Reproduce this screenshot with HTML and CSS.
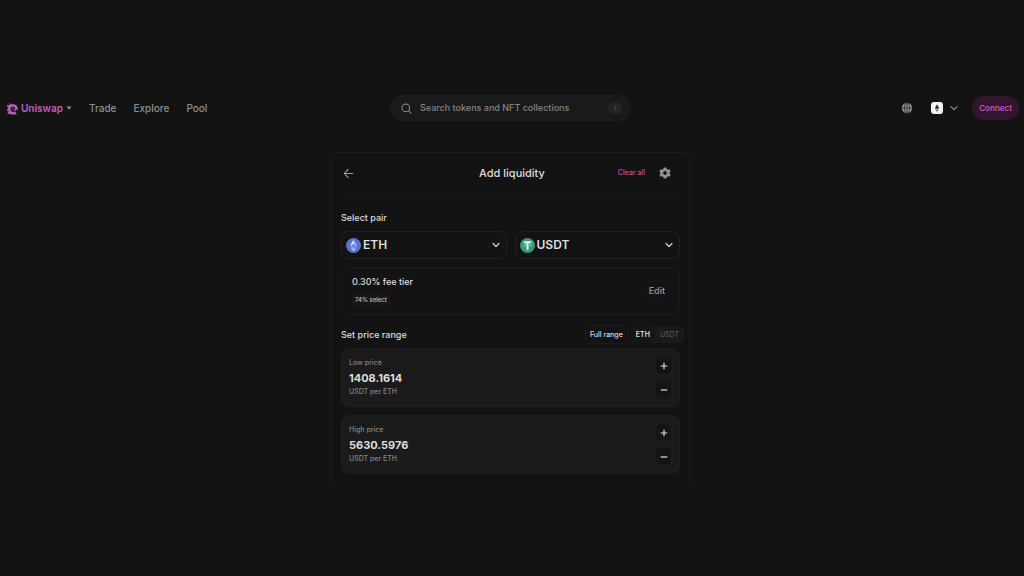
FILE: index.html
```html
<!DOCTYPE html>
<html lang="en">
<head>
<meta charset="utf-8">
<meta name="viewport" content="width=device-width, initial-scale=1">
<title>Add liquidity - Uniswap</title>
<link rel="stylesheet" href="styles.css">
</head>
<body>
<header class="topbar">
  <nav class="nav">
    <button class="brand" type="button" aria-haspopup="menu">
      <svg class="brand-mark" viewBox="0 0 26 26" aria-hidden="true"><path d="M1 5L7 7L7 2L12 5C19 3 25 9 24 17L21 14L20 19L17 16L18 11L13 9L9 12L9 17L13 20L18 19L22 25L11 25L2 23L6 19L1 17L5 12Z" fill="#b95bb9"/><path d="M10 12L15 10L17 14L15 18L11 17Z" fill="#4e204e"/><path d="M3 9L6 10L4 13Z" fill="#b95bb9"/></svg>
      <span>Uniswap</span>
      <svg class="brand-caret" viewBox="0 0 6 4" aria-hidden="true"><path d="M0.5 0.5H5.5L3 3.7Z" fill="currentColor"/></svg>
    </button>
    <a class="nav-link" href="#trade">Trade</a>
    <a class="nav-link" href="#explore">Explore</a>
    <a class="nav-link" href="#pool">Pool</a>
  </nav>
  <label class="search">
    <svg class="search-icon" viewBox="0 0 12 12" fill="none" stroke="currentColor" stroke-width="1.1" stroke-linecap="round" aria-hidden="true"><circle cx="5.2" cy="5.2" r="4.2"/><path d="M8.3 8.3L11 11"/></svg>
    <input class="search-input" type="search" aria-label="Search" placeholder="Search tokens and NFT collections">
    <kbd class="search-key">/</kbd>
  </label>
  <div class="actions">
    <button class="icon-button" type="button" aria-label="Language">
      <svg class="globe" viewBox="0 0 12 12" fill="none" aria-hidden="true"><circle cx="6" cy="6" r="5.2" fill="#8f8f8f"/><g stroke="#202020" stroke-width="0.7"><path d="M1 6H11M6 1V11"/><ellipse cx="6" cy="6" rx="2.5" ry="5.2"/></g></svg>
    </button>
    <button class="network" type="button" aria-label="Network: Ethereum">
      <svg class="network-logo" viewBox="0 0 12 12" aria-hidden="true"><rect width="12" height="12" rx="3" fill="#f2f2f2"/><path d="M6 2.3L8.2 6L6 7.3L3.8 6Z" fill="#333"/><path d="M3.9 6.7L6 8L8.1 6.7L6 9.8Z" fill="#555"/></svg>
      <svg class="chevron" viewBox="0 0 8 8" fill="none" stroke="#8f8f8f" stroke-width="1.2" stroke-linecap="round" stroke-linejoin="round" aria-hidden="true"><path d="M1 2.7L4 5.7L7 2.7"/></svg>
    </button>
    <button class="connect" type="button">Connect</button>
  </div>
</header>

<main class="card">
  <div class="card-head">
    <button class="back" type="button" aria-label="Back">
      <svg class="back-icon" viewBox="0 0 12 12" fill="none" stroke="currentColor" stroke-width="1.2" stroke-linecap="round" stroke-linejoin="round" aria-hidden="true"><path d="M10.6 6H1.4M5.6 1.4L1.4 6L5.6 10.6"/></svg>
    </button>
    <h1 class="title">Add liquidity</h1>
    <div class="head-tools">
      <button class="clear" type="button">Clear all</button>
      <button class="icon-button" type="button" aria-label="Settings">
        <svg class="gear" viewBox="0 0 24 24" aria-hidden="true"><path fill="#949494" fill-rule="evenodd" d="M9.4 1H14.6L15.3 4.2L17.6 5.5L20.7 4.5L23.3 9L20.9 11.2V12.8L23.3 15L20.7 19.5L17.6 18.5L15.3 19.8L14.6 23H9.4L8.7 19.8L6.4 18.5L3.3 19.5L0.7 15L3.1 12.8V11.2L0.7 9L3.3 4.5L6.4 5.5L8.7 4.2ZM12 8.2A3.8 3.8 0 1 0 12 15.8A3.8 3.8 0 1 0 12 8.2Z"/></svg>
      </button>
    </div>
  </div>

  <div class="card-body">
    <h2 class="label">Select pair</h2>
    <div class="pair">
      <button class="token" type="button" aria-haspopup="dialog">
        <svg class="token-logo" viewBox="0 0 30 30" aria-hidden="true"><circle cx="15" cy="15" r="15" fill="#5c73c9"/><path d="M15 4L22 15.5L15 19.5L8 15.5Z" fill="#b9c8fa"/><path d="M15 4V19.5L8 15.5Z" fill="#dce4ff"/><path d="M15 11.5L22 15.5L15 19.5L8 15.5Z" fill="#7389dc"/><path d="M8.5 18L15 22L21.5 18L15 26.5Z" fill="#c8d4fc"/></svg>
        <span class="token-name">ETH</span>
        <svg class="chevron" viewBox="0 0 8 8" fill="none" stroke="#d0d0d0" stroke-width="1.2" stroke-linecap="round" stroke-linejoin="round" aria-hidden="true"><path d="M1 2.5L4 5.5L7 2.5"/></svg>
      </button>
      <button class="token" type="button" aria-haspopup="dialog">
        <svg class="token-logo" viewBox="0 0 30 30" aria-hidden="true"><circle cx="15" cy="15" r="15" fill="#319a78"/><path d="M7.5 6.5H22.5V10.5H17V24H13V10.5H7.5Z" fill="#e4f4ee"/><ellipse cx="15" cy="14.5" rx="9" ry="2.2" fill="none" stroke="#b4dece" stroke-width="1"/></svg>
        <span class="token-name">USDT</span>
        <svg class="chevron" viewBox="0 0 8 8" fill="none" stroke="#d0d0d0" stroke-width="1.2" stroke-linecap="round" stroke-linejoin="round" aria-hidden="true"><path d="M1 2.5L4 5.5L7 2.5"/></svg>
      </button>
    </div>

    <section class="fee">
      <div>
        <p class="fee-name">0.30% fee tier</p>
        <span class="fee-badge">74% select</span>
      </div>
      <button class="edit" type="button">Edit</button>
    </section>

    <div class="range-head">
      <h2 class="label">Set price range</h2>
      <button class="full-range" type="button">Full range</button>
      <div class="toggle" role="group" aria-label="Price currency">
        <button class="toggle-item is-active" type="button" aria-pressed="true">ETH</button>
        <button class="toggle-item" type="button" aria-pressed="false">USDT</button>
      </div>
    </div>

    <div class="prices">
      <section class="price">
        <div class="price-main">
          <label class="price-label" for="low">Low price</label>
          <input class="price-input" id="low" type="text" inputmode="decimal" value="1408.1614">
          <span class="price-unit">USDT per ETH</span>
        </div>
        <div class="steps">
          <button class="step" type="button" aria-label="Increase low price"><svg class="step-icon" viewBox="0 0 8 8" stroke="currentColor" stroke-width="1.2" aria-hidden="true"><path d="M0.7 4H7.3M4 0.7V7.3"/></svg></button>
          <button class="step" type="button" aria-label="Decrease low price"><svg class="step-icon" viewBox="0 0 8 8" stroke="currentColor" stroke-width="1.2" aria-hidden="true"><path d="M0.7 4H7.3"/></svg></button>
        </div>
      </section>
      <section class="price">
        <div class="price-main">
          <label class="price-label" for="high">High price</label>
          <input class="price-input" id="high" type="text" inputmode="decimal" value="5630.5976">
          <span class="price-unit">USDT per ETH</span>
        </div>
        <div class="steps">
          <button class="step" type="button" aria-label="Increase high price"><svg class="step-icon" viewBox="0 0 8 8" stroke="currentColor" stroke-width="1.2" aria-hidden="true"><path d="M0.7 4H7.3M4 0.7V7.3"/></svg></button>
          <button class="step" type="button" aria-label="Decrease high price"><svg class="step-icon" viewBox="0 0 8 8" stroke="currentColor" stroke-width="1.2" aria-hidden="true"><path d="M0.7 4H7.3"/></svg></button>
        </div>
      </section>
    </div>
  </div>
</main>
</body>
</html>
```
FILE: styles.css
```css
* {
  box-sizing: border-box;
}

body {
  margin: 0;
  padding: 95px 5px 0 2px;
  background: #131313;
  color: #dedede;
  font-family: Inter, "Liberation Sans", sans-serif;
  font-size: 10px;
  font-weight: 500;
  line-height: 12px;
}

h1, h2, p {
  margin: 0;
  font-weight: 500;
}

button, input {
  margin: 0;
  padding: 0;
  border: 0;
  background: none;
  color: inherit;
  font: inherit;
}

svg {
  display: block;
  flex: none;
}

/* Top bar */
.topbar {
  display: grid;
  grid-template-columns: 1fr minmax(160px, 241px) 1fr;
  align-items: center;
}

.nav {
  display: flex;
  align-items: center;
  gap: 17px;
  padding-left: 4px;
}

.brand {
  display: flex;
  align-items: center;
  gap: 2px;
  color: #c05fc2;
  font-weight: 600;
}

.brand-mark {
  width: 13px;
  height: 13px;
}

.brand-caret {
  width: 6px;
  height: 4px;
  margin-left: 1px;
  color: #8f8f8f;
}

.nav-link {
  color: #8f8f8f;
  text-decoration: none;
}

.search {
  display: flex;
  align-items: center;
  gap: 8px;
  height: 26px;
  padding: 0 8px 0 10px;
  border: 1px solid #202020;
  border-radius: 13px;
  background: #1a1a1a;
  color: #929292;
}

.search-icon {
  width: 11px;
  height: 11px;
}

.search-input {
  flex: 1;
  min-width: 0;
  outline: 0;
  font-size: 9px;
}

.search-input::placeholder {
  color: #858585;
  opacity: 1;
}

.search-key {
  width: 14px;
  border-radius: 5px;
  background: #242424;
  color: #5c5c5c;
  font-family: inherit;
  font-size: 7px;
  text-align: center;
}

.actions {
  display: flex;
  align-items: center;
  justify-content: flex-end;
}

.globe {
  width: 12px;
  height: 12px;
}

.network {
  display: flex;
  align-items: center;
  gap: 7px;
  margin: 0 14px 0 18px;
}

.network-logo {
  width: 12px;
  height: 12px;
}

.chevron {
  width: 8px;
  height: 8px;
}

.connect {
  height: 24px;
  padding: 0 7px;
  border-radius: 12px;
  background: #34152f;
  color: #b75cb5;
  font-size: 8px;
  font-weight: 600;
}

/* Card */
.card {
  max-width: 359px;
  margin: 31px auto 0;
  border: 1px solid #1e1e1e;
  border-bottom: 0;
  border-radius: 8px 8px 0 0;
}

.card-head {
  display: grid;
  grid-template-columns: 1fr auto 1fr;
  align-items: center;
  margin: 0 9px;
  padding: 13px 9px 18px 2px;
  border-bottom: 1px solid #191919;
}

.back-icon {
  width: 11px;
  height: 11px;
  color: #a0a0a0;
}

.title {
  padding-left: 10px;
  font-size: 11px;
  line-height: 14px;
}

.head-tools {
  display: flex;
  align-items: center;
  justify-content: flex-end;
  gap: 14px;
}

.clear {
  color: #b351b6;
  font-size: 7px;
}

.gear {
  width: 12px;
  height: 12px;
}

.card-body {
  padding: 13px 9px 10px;
}

.label {
  font-size: 9px;
}

.pair {
  display: grid;
  grid-template-columns: 1fr 1fr;
  gap: 8px;
  margin-top: 7px;
}

.token {
  display: flex;
  align-items: center;
  gap: 2px;
  height: 28px;
  padding: 0 6px 0 4px;
  border: 1px solid #222;
  border-radius: 8px;
}

.token-logo {
  width: 15px;
  height: 15px;
}

.token-name {
  flex: 1;
  font-size: 12px;
  font-weight: 600;
  text-align: left;
}

.fee {
  display: flex;
  align-items: center;
  justify-content: space-between;
  margin-top: 8px;
  padding: 8px 10px;
  border: 1px solid #1b1b1b;
  border-radius: 8px;
}

.fee-name {
  font-size: 9px;
}

.fee-badge {
  display: block;
  width: fit-content;
  margin-top: 6px;
  padding: 0 3px;
  border-radius: 3px;
  background: #181818;
  color: #c4c4c4;
  font-size: 6px;
}

.edit {
  height: 20px;
  padding: 0 3px;
  border: 1px solid #191919;
  border-radius: 5px;
  color: #9b9b9b;
  font-size: 9px;
}

.range-head {
  display: flex;
  align-items: center;
  gap: 3px;
  margin: 10px -4px 4px 0;
  font-size: 7px;
}

.range-head .label {
  flex: 1;
}

.full-range {
  height: 19px;
  padding: 0 4px;
  border: 1px solid #1b1b1b;
  border-radius: 5px;
}

.toggle {
  display: flex;
  height: 17px;
  border-radius: 5px;
  background: #1a1a1a;
}

.toggle-item {
  padding: 0 5px;
  border-radius: 5px;
  color: #555;
}

.toggle-item.is-active {
  background: #161616;
  color: #dedede;
  font-weight: 600;
}

.prices {
  display: grid;
  gap: 8px;
}

.price {
  display: flex;
  align-items: center;
  padding: 8px 8px 8px 7px;
  border: 1px solid #1e1e1e;
  border-radius: 8px;
  background: #1b1b1b;
}

.price-main {
  display: flex;
  flex: 1;
  flex-direction: column;
  min-width: 0;
  color: #858585;
  font-size: 7px;
}

.price-input {
  width: 100%;
  height: 17px;
  outline: 0;
  color: #dedede;
  font-size: 11px;
  font-weight: 700;
}

.steps {
  display: grid;
  gap: 7px;
}

.step {
  display: grid;
  place-items: center;
  width: 15px;
  height: 17px;
  border-radius: 5px;
  background: #141414;
  color: #dedede;
}

.step-icon {
  width: 8px;
  height: 8px;
}
```
